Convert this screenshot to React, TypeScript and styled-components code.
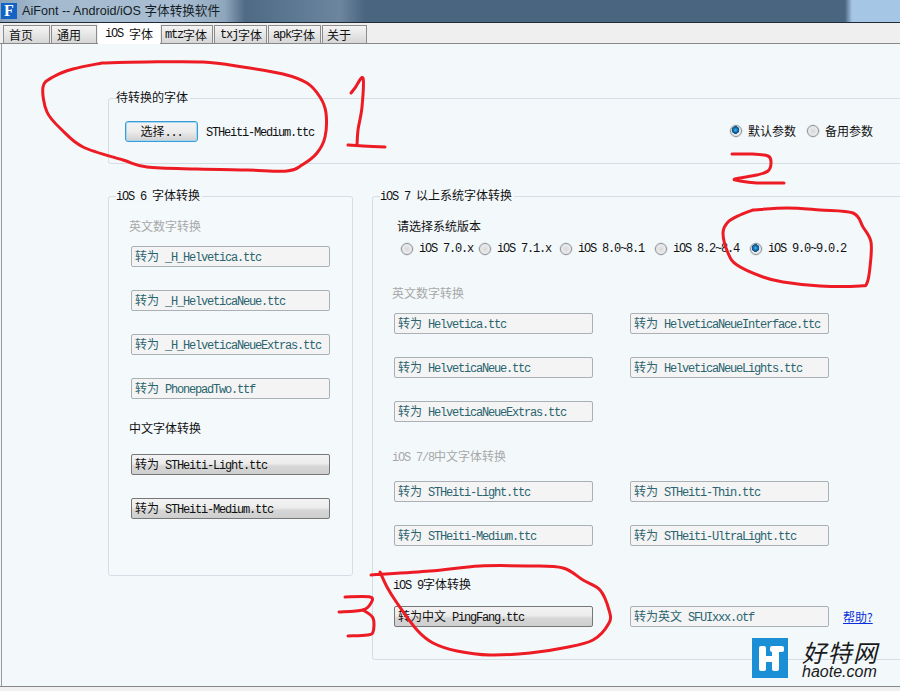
import React from 'react';
import styled, { createGlobalStyle } from 'styled-components';

const Global = createGlobalStyle`
  html, body { margin: 0; padding: 0; background: #f3f8fb; }
  body { font-family: "Noto Sans CJK SC", "Liberation Sans", sans-serif; font-size: 12px; color: #111; }
`;

const Windowed = styled.div`
  position: relative; width: 900px; height: 691px; overflow: hidden;
  display: flex; flex-direction: column; background: #f3f8fb;
`;
const TitleBar = styled.header`
  height: 22px; flex: none; display: flex; align-items: center; gap: 5px; padding-left: 1px;
  border-bottom: 1px solid #1f2a35;
  background: linear-gradient(90deg, #8aa3ba 0, #a3b9cd 40px, #a9bed2 180px, #8ea6bc 225px, #4f6a84 245px, #5f7a94 300px, #6d869e 340px, #4a6580 365px, #4a6580 845px, #a6c6e5 852px, #a6c6e5 100%);
`;
const AppIcon = styled.div`
  width: 16px; height: 16px; background: #1263c4; color: #fff; display: flex; align-items: center; justify-content: center;
  font-family: "Liberation Serif", serif; font-weight: 700; font-size: 16px; line-height: 16px;
`;
const TitleText = styled.span`
  font-family: "Liberation Sans", "Noto Sans CJK SC", sans-serif; font-size: 12.6px; color: #141d26; line-height: 16px;
`;
const TabBar = styled.nav`
  height: 20px; flex: none; display: flex; align-items: flex-end; gap: 1px; padding-left: 3px;
  background: #efefef; border-bottom: 1px solid #888;
`;
const Tab = styled.div<{ $w: number; $active?: boolean; $pad: number }>`
  box-sizing: border-box; width: ${p => p.$w}px; height: ${p => (p.$active ? 21 : 18)}px;
  margin-bottom: ${p => (p.$active ? -1 : 0)}px; padding-left: ${p => p.$pad}px;
  display: flex; align-items: center; line-height: 16px; white-space: pre; color: #111;
  background: ${p => (p.$active ? '#fff' : 'linear-gradient(#f4f4f4, #e6e6e6 50%, #d6d6d6)')};
  border: 1px solid #8c8c8c; border-bottom: none; ${p => (p.$active ? 'border-color: #fff;' : '')}
  position: relative;
`;
const Lat = styled.span`
  font-family: "Liberation Mono", monospace; font-size: 12px; letter-spacing: -1.2px; white-space: pre; line-height: 14px;
`;
const Content = styled.main`
  flex: 1; display: flex; flex-direction: column; padding: 54px 0 0 106px; border-left: 1px solid #999;
  margin-left: 1px; min-height: 0; box-sizing: border-box;
`;
const Group = styled.section`
  position: relative; box-sizing: border-box; border: 1px solid #d6dee5; border-radius: 3px;
`;
const TopGroup = styled(Group)`
  height: 66px; margin-right: -2px; display: flex; align-items: center; padding: 0 28px 0 16px; margin-bottom: 32px;
`;
const Legend = styled.h2`
  position: absolute; top: -10px; left: 7px; margin: 0; padding: 0 2px 0 0; background: #f3f8fb; height: 16px;
  font-size: 12px; font-weight: 400; line-height: 16px; color: #111; white-space: pre;
`;
const ChooseButton = styled.button`
  box-sizing: border-box; width: 73px; height: 21px; padding: 0; font: inherit; line-height: 16px; color: #111;
  border: 1px solid #3c9bd3; border-radius: 3px; box-shadow: inset 0 0 0 1px #a5d7f0;
  background: linear-gradient(#f4f4f4, #ececec 50%, #d0d0d0);
`;
const FileName = styled.span`
  margin-left: 8px; line-height: 16px;
`;
const RadioSet = styled.div`
  margin-left: auto; display: flex; gap: 11px;
`;
const RadioItem = styled.label<{ $w?: number }>`
  display: flex; align-items: center; gap: 6px; height: 16px; line-height: 16px; white-space: pre;
  ${p => (p.$w ? `width: ${p.$w}px;` : '')}
`;
const Radio = styled.input.attrs({ type: 'radio' })`
  appearance: none; box-sizing: border-box; width: 12px; height: 12px; margin: 0; flex: none; border-radius: 50%;
  border: 1px solid #8d949a;
  background: radial-gradient(circle at 50% 50%, #d8d8d8 0, #eeeeee 70%, #f5f5f5 100%);
  box-shadow: 0 0 0 0.5px #c8ced3;
  &:checked {
    background: radial-gradient(circle at 45% 40%, #45b4ea 0, #0a5fa0 34%, #0f4c7d 44%, #e8e8e8 50%, #f2f2f2 100%);
  }
`;
const Lower = styled.div`
  display: flex; align-items: flex-start; gap: 19px;
`;
const LeftGroup = styled(Group)`
  width: 245px; height: 380px; flex: none; padding: 21px 0 0 20px; background: #f4f9fc;
`;
const RightGroup = styled(Group)`
  flex: 1; height: 464px; margin-right: -2px; padding: 21px 0 0 19px;
`;
const Heading = styled.h3<{ $muted?: boolean; $top?: number; $bottom?: number; $x?: number }>`
  margin: ${p => p.$top ?? 0}px 0 ${p => p.$bottom ?? 12}px ${p => p.$x ?? 0}px; height: 16px;
  font-size: 12px; font-weight: 400; line-height: 16px; white-space: pre;
  color: ${p => (p.$muted ? '#a8a8a8' : '#111')};
`;
const Stack = styled.div`
  display: flex; flex-direction: column; gap: 23px; margin-left: 2px;
`;
const FontGrid = styled.div`
  display: grid; grid-template-columns: 199px 199px; grid-auto-rows: 21px; gap: 23px 37px; margin-left: 2px;
`;
const ConvertButton = styled.button<{ $on?: boolean }>`
  box-sizing: border-box; width: 199px; height: 21px; padding: 0 0 0 3px; font: inherit; line-height: 16px; text-align: left;
  white-space: pre; border-radius: 2px;
  color: ${p => (p.$on ? '#111' : '#2b6470')};
  border: 1px solid ${p => (p.$on ? '#777' : '#aab0b5')};
  background: ${p => (p.$on ? 'linear-gradient(#f3f3f3, #ececec 45%, #d6d6d6 60%, #cfcfcf)' : '#f4f4f4')};
`;
const VersionRow = styled.div`
  display: flex; margin: 7px 0 28px 9px;
`;
const BottomRow = styled.div`
  display: flex; align-items: center; margin-left: 2px; gap: 37px;
`;
const HelpLink = styled.a`
  margin-left: -23px; color: #0a2fd8; text-decoration: underline; line-height: 16px;
`;
const Footer = styled.footer`
  height: 4px; flex: none; background: #f0f0f0; border-top: 1px solid #888;
`;
const Ink = styled.svg`
  position: absolute; left: 0; top: 0; pointer-events: none;
`;
const Watermark = styled.div`
  position: absolute; left: 752px; top: 638px; display: flex; gap: 14px; pointer-events: none;
`;
const MarkText = styled.div`
  display: flex; flex-direction: column; margin-top: 2px;
`;
const MarkCn = styled.span`
  font-size: 24px; line-height: 24px; letter-spacing: 1.5px; color: #1a1a1a; font-style: italic;
`;
const MarkEn = styled.span`
  font-family: "Liberation Sans", sans-serif; font-size: 16px; line-height: 16px; color: #1a1a1a; font-style: italic;
`;

type P = [number, number];
const smooth = (pts: P[]) => {
  let d = `M${pts[0][0]} ${pts[0][1]}`;
  for (let i = 0; i < pts.length - 1; i++) {
    const a = pts[Math.max(i - 1, 0)], b = pts[i], c = pts[i + 1], e = pts[Math.min(i + 2, pts.length - 1)];
    d += ` C${(b[0] + (c[0] - a[0]) / 6).toFixed(1)} ${(b[1] + (c[1] - a[1]) / 6).toFixed(1)} ${(c[0] - (e[0] - b[0]) / 6).toFixed(1)} ${(c[1] - (e[1] - b[1]) / 6).toFixed(1)} ${c[0]} ${c[1]}`;
  }
  return d;
};
const strokes: P[][] = [
  [[102,63],[147,62],[203,62],[243,67],[283,74],[307,83],[320,97],[326,113],[325,137],[317,153],[302,165],[287,171],[247,170],[197,169],[147,167],[123,160],[83,147],[62,130],[47,112],[43,87],[53,77],[73,69],[102,63]],
  [[351,93],[355,88],[363,78],[362,107],[358,130],[357,145]],
  [[348,145],[363,146],[385,147]],
  [[732,154],[750,154],[768,156],[771,163],[768,171],[757,175],[735,179],[740,181],[757,183],[784,183]],
  [[753,210],[787,208],[820,210],[853,213],[863,227],[871,242],[870,267],[867,283],[860,286],[820,286],[783,282],[763,277],[737,265],[728,253],[723,233],[728,222],[740,215],[753,210]],
  [[345,597],[370,597],[371,603],[363,610],[339,612]],
  [[363,610],[373,618],[373,632],[367,635],[348,636]],
  [[371,575],[430,571],[480,566],[530,566],[563,568],[583,580],[600,590],[609,610],[609,623],[593,640],[563,648],[530,653],[490,655],[457,651],[433,643],[417,630],[397,603],[387,587],[380,572]],
];

const Convert = ({ name, on, cn = '转为' }: { name: string; on?: boolean; cn?: string }) => (
  <ConvertButton $on={on}>{cn}<Lat> {name}</Lat></ConvertButton>
);

const tabs: { w: number; pad: number; cn: string; lat?: string; active?: boolean }[] = [
  { w: 47, pad: 5, cn: '首页' },
  { w: 46, pad: 5, cn: '通用' },
  { w: 62, pad: 6, lat: 'iOS ', cn: '字体', active: true },
  { w: 52, pad: 3, lat: 'mtz', cn: '字体' },
  { w: 53, pad: 5, lat: 'txj', cn: '字体' },
  { w: 53, pad: 4, lat: 'apk', cn: '字体' },
  { w: 45, pad: 4, cn: '关于' },
];

const versions = [
  { w: 78, label: 'iOS 7.0.x' },
  { w: 81, label: 'iOS 7.1.x' },
  { w: 95, label: 'iOS 8.0~8.1' },
  { w: 95, label: 'iOS 8.2~8.4' },
  { w: 100, label: 'iOS 9.0~9.0.2', on: true },
];

export default function App() {
  return (
    <Windowed>
      <Global />
      <TitleBar>
        <AppIcon>F</AppIcon>
        <TitleText>AiFont -- Android/iOS 字体转换软件</TitleText>
      </TitleBar>
      <TabBar>
        {tabs.map(t => (
          <Tab key={t.cn + t.w} $w={t.w} $pad={t.pad} $active={t.active}>
            {t.lat && <Lat>{t.lat}</Lat>}{t.cn}
          </Tab>
        ))}
      </TabBar>
      <Content>
        <TopGroup>
          <Legend>待转换的字体</Legend>
          <ChooseButton>选择<Lat>...</Lat></ChooseButton>
          <FileName><Lat>STHeiti-Medium.ttc</Lat></FileName>
          <RadioSet>
            <RadioItem><Radio name="param" defaultChecked />默认参数</RadioItem>
            <RadioItem><Radio name="param" />备用参数</RadioItem>
          </RadioSet>
        </TopGroup>
        <Lower>
          <LeftGroup>
            <Legend><Lat>iOS 6 </Lat>字体转换</Legend>
            <Heading $muted>英文数字转换</Heading>
            <Stack>
              <Convert name="_H_Helvetica.ttc" />
              <Convert name="_H_HelveticaNeue.ttc" />
              <Convert name="_H_HelveticaNeueExtras.ttc" />
              <Convert name="PhonepadTwo.ttf" />
            </Stack>
            <Heading $top={21} $bottom={18}>中文字体转换</Heading>
            <Stack>
              <Convert name="STHeiti-Light.ttc" on />
              <Convert name="STHeiti-Medium.ttc" on />
            </Stack>
          </LeftGroup>
          <RightGroup>
            <Legend><Lat>iOS 7 </Lat>以上系统字体转换</Legend>
            <Heading $x={5} $bottom={0}>请选择系统版本</Heading>
            <VersionRow>
              {versions.map(v => (
                <RadioItem key={v.label} $w={v.w}>
                  <Radio name="ver" defaultChecked={v.on} /><Lat>{v.label}</Lat>
                </RadioItem>
              ))}
            </VersionRow>
            <Heading $muted>英文数字转换</Heading>
            <FontGrid>
              <Convert name="Helvetica.ttc" />
              <Convert name="HelveticaNeueInterface.ttc" />
              <Convert name="HelveticaNeue.ttc" />
              <Convert name="HelveticaNeueLights.ttc" />
              <Convert name="HelveticaNeueExtras.ttc" />
            </FontGrid>
            <Heading $muted $top={26} $bottom={17}><Lat>iOS 7/8</Lat>中文字体转换</Heading>
            <FontGrid>
              <Convert name="STHeiti-Light.ttc" />
              <Convert name="STHeiti-Thin.ttc" />
              <Convert name="STHeiti-Medium.ttc" />
              <Convert name="STHeiti-UltraLight.ttc" />
            </FontGrid>
            <Heading $top={30} $bottom={14} $x={1}><Lat>iOS 9</Lat>字体转换</Heading>
            <BottomRow>
              <Convert name="PingFang.ttc" cn="转为中文" on />
              <Convert name="SFUIxxx.otf" cn="转为英文" />
              <HelpLink>帮助?</HelpLink>
            </BottomRow>
          </RightGroup>
        </Lower>
      </Content>
      <Footer />
      <Ink width="900" height="691" viewBox="0 0 900 691" fill="none" stroke="#ed1c24" strokeWidth="3" strokeLinecap="round" strokeLinejoin="round">
        {strokes.map((s, i) => <path key={i} d={smooth(s)} />)}
      </Ink>
      <Watermark>
        <svg width="36" height="40" viewBox="0 0 36 40">
          <rect width="36" height="40" fill="#1a8fd6" />
          <g fill="#fff">
            <rect x="7" y="8" width="7" height="25" rx="2" />
            <rect x="20" y="8" width="7" height="25" rx="2" />
            <rect x="18" y="8" width="14" height="6" rx="2" />
            <rect x="13" y="18" width="8" height="6" />
          </g>
        </svg>
        <MarkText>
          <MarkCn>好特网</MarkCn>
          <MarkEn>haote.com</MarkEn>
        </MarkText>
      </Watermark>
    </Windowed>
  );
}
